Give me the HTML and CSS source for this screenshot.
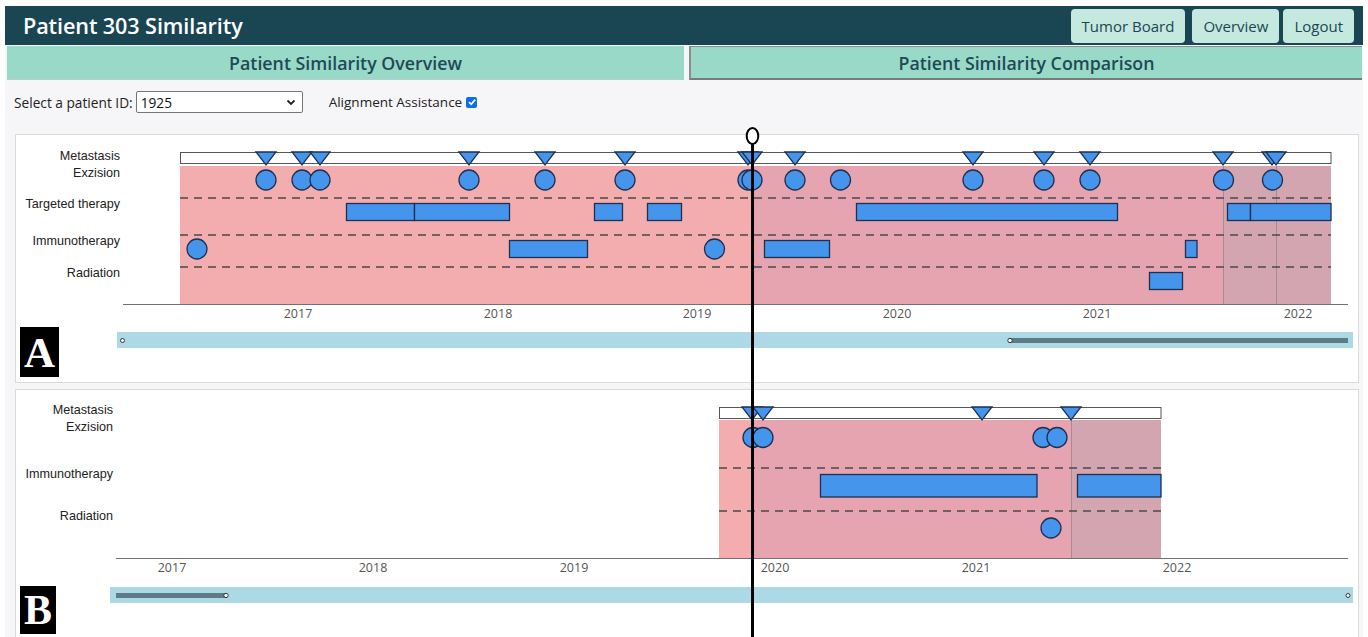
FILE: index.html
```html
<!DOCTYPE html>
<html lang="en">
<head>
<meta charset="utf-8">
<title>Patient 303 Similarity</title>
<link rel="stylesheet" href="styles.css">
</head>
<body>
<div class="app">
  <header class="topbar">
    <h1 class="title">Patient 303 Similarity</h1>
    <nav class="nav">
      <button class="nav-btn" type="button">Tumor Board</button>
      <button class="nav-btn" type="button">Overview</button>
      <button class="nav-btn nav-last" type="button">Logout</button>
    </nav>
  </header>

  <div class="tabs">
    <div class="tab tab-active">Patient Similarity Overview</div>
    <div class="tab tab-idle">Patient Similarity Comparison</div>
  </div>

  <main class="content">
    <div class="controls">
      <label class="field">Select a patient ID:
        <span class="select">
          <span class="select-value">1925</span>
          <svg class="chevron" width="10" height="7" viewBox="0 0 10 7"><path d="M1.5 1.5 L5 5 L8.5 1.5" fill="none" stroke="#222" stroke-width="1.8"/></svg>
        </span>
      </label>
      <label class="field check">Alignment Assistance
        <span class="checkbox"><svg width="10" height="10" viewBox="0 0 10 10"><path d="M2 5.2 L4.2 7.3 L8.2 2.6" fill="none" stroke="#fff" stroke-width="1.7"/></svg></span>
      </label>
    </div>

    <!-- Reference patient timeline -->
    <section class="panel panel-a">
      <svg class="timeline" width="1342" height="190" viewBox="16 135 1342 190">
        <g class="row-labels">
          <text x="120" y="159.5">Metastasis</text>
          <text x="120" y="176.5">Exzision</text>
          <text x="120" y="207.5">Targeted therapy</text>
          <text x="120" y="245">Immunotherapy</text>
          <text x="120" y="277">Radiation</text>
        </g>
        <rect x="180" y="166" width="572" height="138" fill="#f4adae"/>
        <rect x="752" y="166" width="471" height="138" fill="#e6a4b0"/>
        <rect x="1223" y="166" width="108" height="138" fill="#d3a5b0"/>
        <line x1="1223.5" y1="166" x2="1223.5" y2="304" class="cut"/>
        <line x1="1276.5" y1="166" x2="1276.5" y2="304" class="cut"/>
        <g class="dash">
          <line x1="180" y1="198" x2="1331" y2="198"/>
          <line x1="180" y1="235" x2="1331" y2="235"/>
          <line x1="180" y1="267" x2="1331" y2="267"/>
        </g>
        <line class="axis" x1="123" y1="304.5" x2="1348" y2="304.5"/>
        <g class="years">
          <text x="298" y="318">2017</text>
          <text x="498" y="318">2018</text>
          <text x="697" y="318">2019</text>
          <text x="897" y="318">2020</text>
          <text x="1097" y="318">2021</text>
          <text x="1298" y="318">2022</text>
        </g>
        <g class="ev">
          <!-- targeted therapy -->
          <rect x="346.5" y="203.5" width="68" height="17"/>
          <rect x="414.5" y="203.5" width="95" height="17"/>
          <rect x="594.5" y="203.5" width="28" height="17"/>
          <rect x="647.5" y="203.5" width="34" height="17"/>
          <rect x="856.5" y="203.5" width="261" height="17"/>
          <rect x="1227.5" y="203.5" width="23" height="17"/>
          <rect x="1250.5" y="203.5" width="80.5" height="17"/>
          <!-- immunotherapy -->
          <circle cx="197" cy="249" r="10"/>
          <rect x="509.5" y="240.5" width="78" height="17"/>
          <circle cx="714.5" cy="249" r="10"/>
          <rect x="764.5" y="240.5" width="65" height="17"/>
          <rect x="1185.5" y="240.5" width="11.5" height="17"/>
          <!-- radiation -->
          <rect x="1149.5" y="272.5" width="33" height="17"/>
          <!-- exzision -->
          <circle cx="266" cy="180" r="10"/>
          <circle cx="302" cy="180" r="10"/>
          <circle cx="320" cy="180" r="10"/>
          <circle cx="469" cy="180" r="10"/>
          <circle cx="545" cy="180" r="10"/>
          <circle cx="625" cy="180" r="10"/>
          <circle cx="748" cy="180" r="10"/>
          <circle cx="752" cy="180" r="10"/>
          <circle cx="795" cy="180" r="10"/>
          <circle cx="840.5" cy="180" r="10"/>
          <circle cx="973" cy="180" r="10"/>
          <circle cx="1044" cy="180" r="10"/>
          <circle cx="1090" cy="180" r="10"/>
          <circle cx="1223.5" cy="180" r="10"/>
          <circle cx="1272.5" cy="180" r="10"/>
        </g>
        <rect class="meta-bar" x="180.5" y="152.5" width="1150.5" height="11"/>
        <g class="ev">
          <path d="M256 152 L276 152 L266 165 Z"/>
          <path d="M292 152 L312 152 L302 165 Z"/>
          <path d="M310 152 L330 152 L320 165 Z"/>
          <path d="M459 152 L479 152 L469 165 Z"/>
          <path d="M535 152 L555 152 L545 165 Z"/>
          <path d="M615 152 L635 152 L625 165 Z"/>
          <path d="M738 152 L758 152 L748 165 Z"/>
          <path d="M742 152 L762 152 L752 165 Z"/>
          <path d="M785 152 L805 152 L795 165 Z"/>
          <path d="M963 152 L983 152 L973 165 Z"/>
          <path d="M1034 152 L1054 152 L1044 165 Z"/>
          <path d="M1080 152 L1100 152 L1090 165 Z"/>
          <path d="M1213 152 L1233 152 L1223 165 Z"/>
          <path d="M1262 152 L1282 152 L1272 165 Z"/>
          <path d="M1266 152 L1286 152 L1276 165 Z"/>
        </g>
      </svg>
      <div class="panel-foot">
        <div class="badge badge-a">A</div>
        <svg class="brush brush-a" width="1236" height="16" viewBox="0 0 1236 16">
          <rect width="1236" height="16" fill="#add8e6"/>
          <circle cx="5.5" cy="8.5" r="2" class="knob"/>
          <rect x="893" y="6" width="338" height="5" fill="#5e7c84"/>
          <circle cx="893" cy="8.5" r="2.2" class="knob"/>
        </svg>
      </div>
    </section>

    <!-- Compared patient timeline -->
    <section class="panel panel-b">
      <svg class="timeline" width="1342" height="194" viewBox="16 390 1342 194">
        <g class="row-labels">
          <text x="113" y="414">Metastasis</text>
          <text x="113" y="431">Exzision</text>
          <text x="113" y="478">Immunotherapy</text>
          <text x="113" y="520">Radiation</text>
        </g>
        <rect x="719" y="420" width="33" height="138" fill="#f4adae"/>
        <rect x="752" y="420" width="319" height="138" fill="#e6a4b0"/>
        <rect x="1071" y="420" width="90" height="138" fill="#d3a5b0"/>
        <line x1="1071.5" y1="420" x2="1071.5" y2="558" class="cut"/>
        <g class="dash">
          <line x1="719" y1="468" x2="1161" y2="468"/>
          <line x1="719" y1="511" x2="1161" y2="511"/>
        </g>
        <line class="axis" x1="116" y1="558.5" x2="1348" y2="558.5"/>
        <g class="years">
          <text x="172" y="572">2017</text>
          <text x="373" y="572">2018</text>
          <text x="574" y="572">2019</text>
          <text x="775" y="572">2020</text>
          <text x="976" y="572">2021</text>
          <text x="1177" y="572">2022</text>
        </g>
        <g class="ev">
          <rect x="820.5" y="474.5" width="216.5" height="22.5"/>
          <rect x="1077.5" y="474.5" width="83.5" height="22.5"/>
          <circle cx="1051" cy="528" r="10"/>
          <circle cx="753" cy="437.5" r="10"/>
          <circle cx="763" cy="437.5" r="10"/>
          <circle cx="1043" cy="437.5" r="10"/>
          <circle cx="1057" cy="437.5" r="10"/>
        </g>
        <rect class="meta-bar" x="719.5" y="407.5" width="441.5" height="11"/>
        <g class="ev">
          <path d="M742 407 L762 407 L752 420 Z"/>
          <path d="M753 407 L773 407 L763 420 Z"/>
          <path d="M972 407 L992 407 L982 420 Z"/>
          <path d="M1061 407 L1081 407 L1071 420 Z"/>
        </g>
      </svg>
      <div class="panel-foot">
        <div class="badge badge-b">B</div>
        <svg class="brush brush-b" width="1243" height="16" viewBox="0 0 1243 16">
          <rect width="1243" height="16" fill="#add8e6"/>
          <rect x="6" y="6" width="110" height="5" fill="#5e7c84"/>
          <circle cx="116" cy="8.5" r="2.2" class="knob"/>
          <circle cx="1238" cy="8.5" r="2" class="knob"/>
        </svg>
      </div>
    </section>
  </main>
</div>

<!-- shared alignment cursor across both timelines -->
<svg class="align-cursor" width="24" height="511" viewBox="740 126 24 511">
  <line x1="752.5" y1="140" x2="752.5" y2="637" stroke="#000" stroke-width="3"/>
  <ellipse cx="752.5" cy="136" rx="5.8" ry="8" fill="#fff" stroke="#000" stroke-width="2"/>
</svg>
</body>
</html>
```

FILE: styles.css
```css
* { box-sizing: border-box; }

html, body {
  margin: 0;
  padding: 0;
  background: #ffffff;
  height: 637px;
  overflow: hidden;
}

body {
  position: relative;
  font-family: "Open Sans", "Noto Sans", sans-serif;
  color: #222;
}

.app {
  margin: 6px 5px 0 5px;
  background: #f6f6f9;
  height: 631px;
}

/* top bar */
.topbar {
  height: 39px;
  background: #1a4654;
  display: flex;
  align-items: center;
  justify-content: space-between;
  padding: 0 9px 0 18px;
}

.title {
  margin: 0;
  color: #ffffff;
  font-size: 21.6px;
  font-weight: 600;
  letter-spacing: -0.1px;
}

.nav {
  display: flex;
  gap: 7px;
  align-items: center;
}

.nav-btn {
  font-family: inherit;
  font-size: 15px;
  color: #1a4654;
  background: #c6e9df;
  border: none;
  border-radius: 4px;
  height: 34px;
  padding: 0 11px;
  margin-top: 1px;
}

.nav-last {
  margin-left: -3px;
}

/* tabs */
.tabs {
  display: flex;
  gap: 5px;
  margin-top: 1px;
  height: 34px;
  padding: 0 1px 0 2px;
}

.tab {
  background: #98d9c8;
  display: flex;
  align-items: center;
  justify-content: center;
  font-size: 17.8px;
  font-weight: 600;
  color: #1f4a55;
}

.tab-active {
  flex: 0 0 677px;
  border-bottom: 1px solid #b8cfc9;
}

.tab-idle {
  flex: 1;
  border-top: 1px solid #8c8c8c;
  border-left: 2px solid #8c8c8c;
  border-bottom: 2px solid #7a7a7a;
}

/* controls */
.content {
  padding: 0 4px 0 10px;
}

.controls {
  display: flex;
  align-items: center;
  height: 22px;
  margin-top: 11px;
  margin-left: -1px;
  font-size: 13.7px;
  color: #222;
}

.field {
  display: flex;
  align-items: center;
  gap: 3px;
}

.select {
  width: 167px;
  height: 22px;
  background: #fff;
  border: 1px solid #767676;
  border-radius: 2px;
  display: flex;
  align-items: center;
  justify-content: space-between;
  padding: 0 6px 0 4px;
  font-size: 13.7px;
  color: #111;
}

.check {
  margin-left: 26px;
  gap: 4px;
  font-size: 13.5px;
}

.checkbox {
  width: 11px;
  height: 11px;
  background: #0a6cf0;
  border-radius: 2px;
  display: flex;
  align-items: center;
  justify-content: center;
}

/* panels */
.panel {
  background: #ffffff;
  border: 1px solid #dadada;
}

.panel-a {
  margin-top: 21px;
  height: 249px;
}

.panel-b {
  margin-top: 6px;
  height: 260px;
}

.timeline {
  display: block;
}

.panel-foot {
  display: flex;
  align-items: flex-start;
  padding-left: 4px;
}

.badge {
  background: #000;
  color: #fff;
  font-family: "Liberation Serif", "DejaVu Serif", serif;
  font-weight: 700;
  display: flex;
  align-items: center;
  justify-content: center;
}

.badge-a {
  width: 39px;
  height: 50px;
  margin-top: 2px;
  font-size: 43px;
}

.badge-b {
  width: 36px;
  height: 48px;
  margin-top: 2px;
  font-size: 42px;
}

.brush {
  display: block;
}

.brush-a {
  margin-top: 7px;
  margin-left: 58px;
}

.brush-b {
  margin-top: 3px;
  margin-left: 54px;
}

.knob {
  fill: #ffffff;
  stroke: #333;
  stroke-width: 1;
}

/* svg chart parts */
.row-labels text {
  font-family: "Liberation Sans", Arial, sans-serif;
  font-size: 12.6px;
  fill: #222;
  text-anchor: end;
}

.years text {
  font-family: "Open Sans", sans-serif;
  font-size: 12.5px;
  fill: #555;
  text-anchor: middle;
}

.dash line {
  stroke: #4a4a4a;
  stroke-width: 1.3;
  stroke-dasharray: 8 6;
}

.axis {
  stroke: #707070;
  stroke-width: 1;
}

.cut {
  stroke: #a88a94;
  stroke-width: 1;
}

.meta-bar {
  fill: #ffffff;
  stroke: #555;
  stroke-width: 1;
}

.ev circle,
.ev rect,
.ev path {
  fill: #4595ec;
  stroke: #1f2f4f;
  stroke-width: 1.3;
}

.align-cursor {
  position: absolute;
  left: 740px;
  top: 126px;
  pointer-events: none;
}
```
